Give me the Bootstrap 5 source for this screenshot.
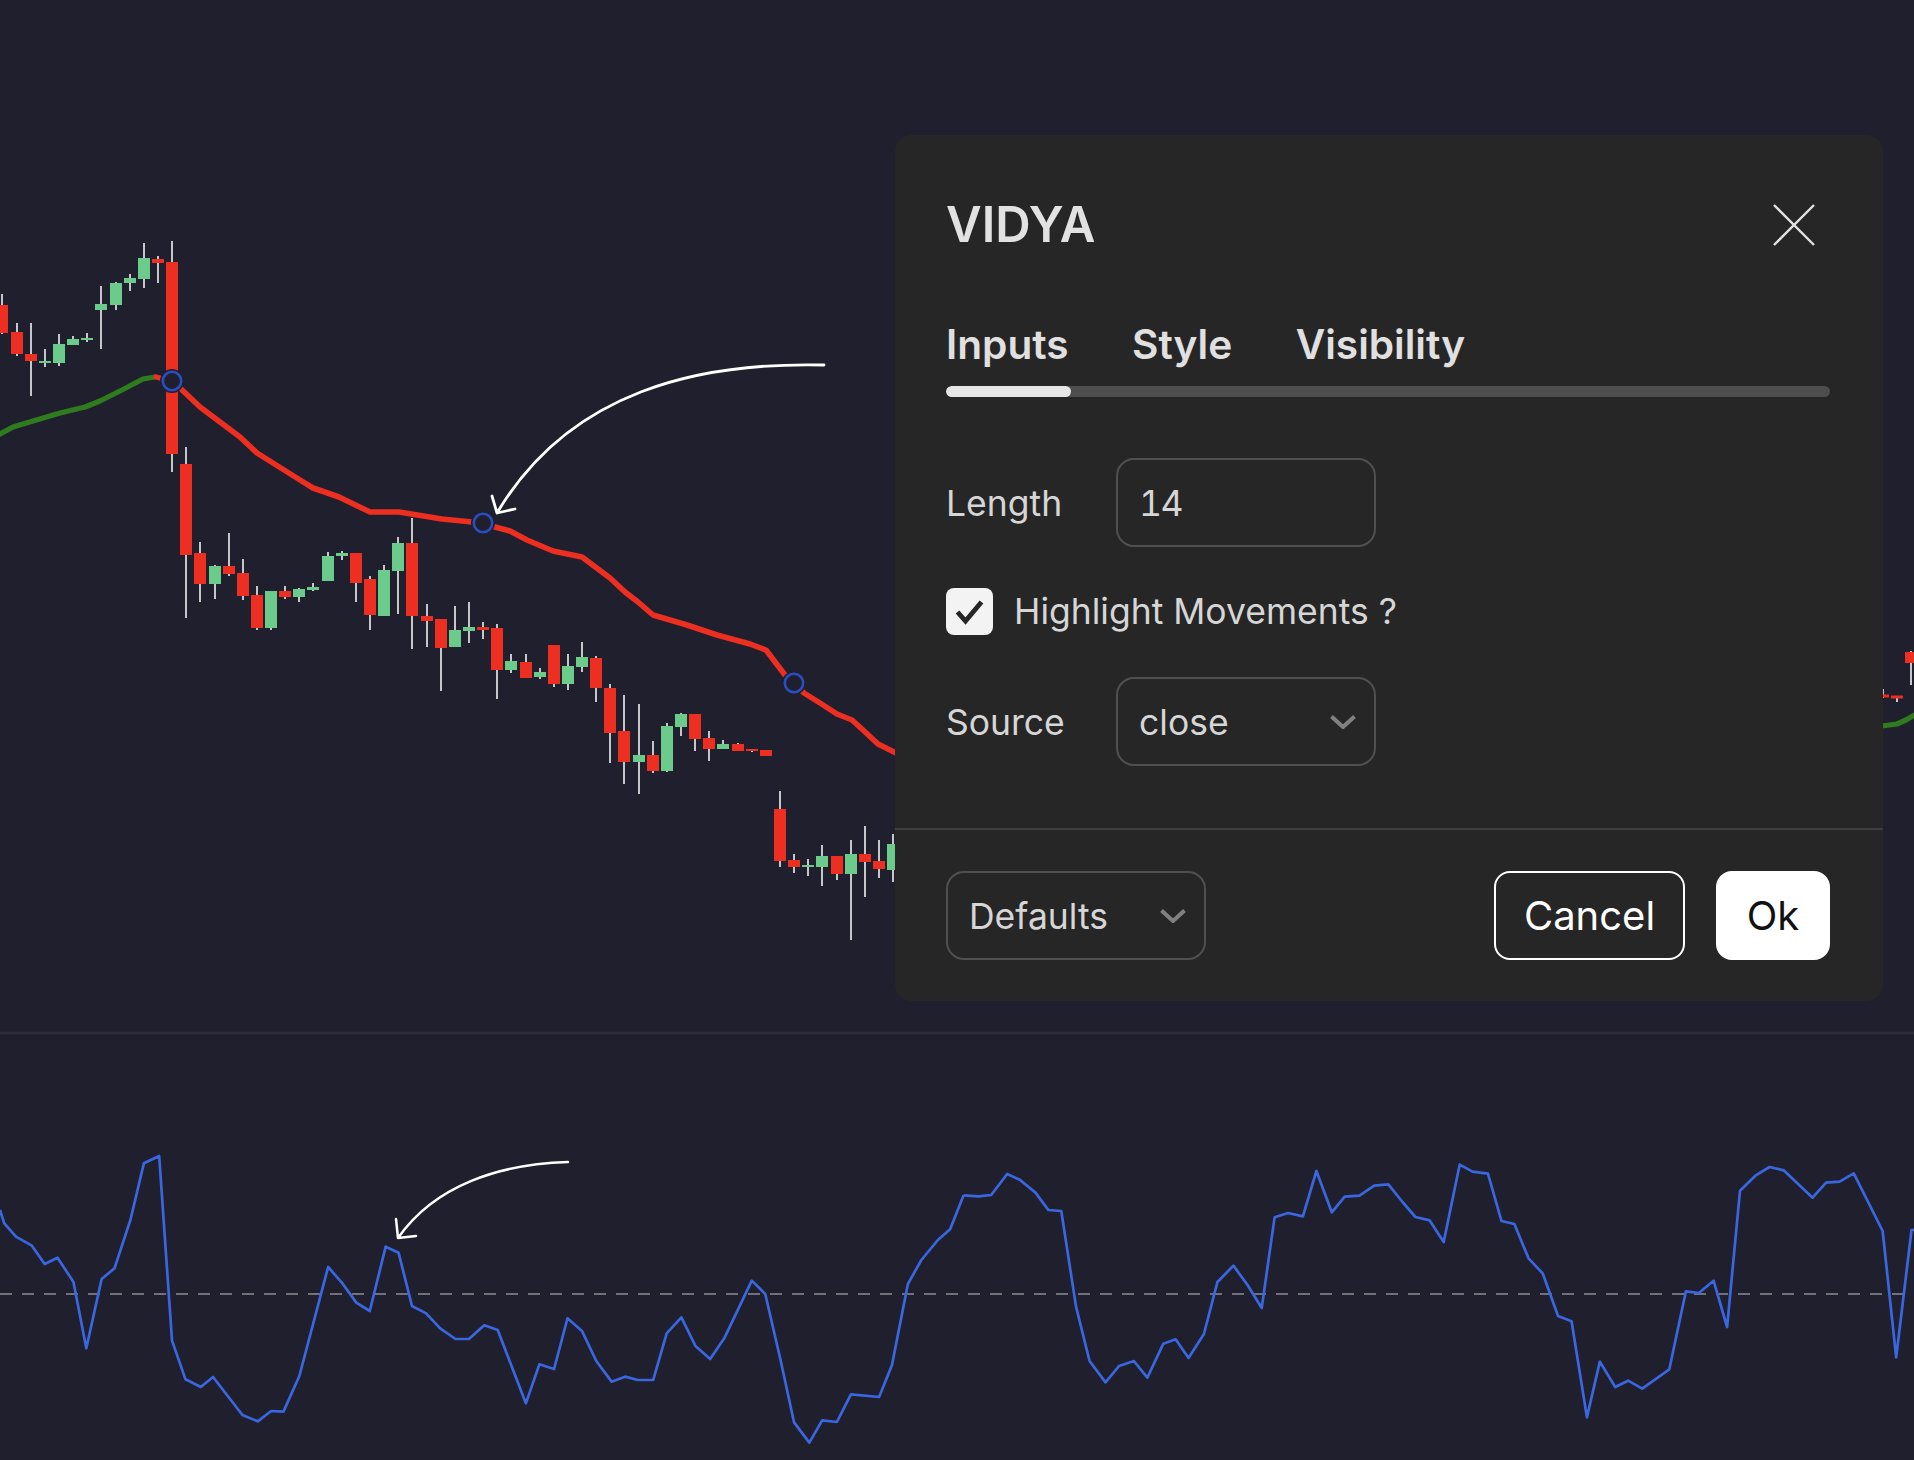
<!DOCTYPE html>
<html lang="en">
<head>
<meta charset="utf-8">
<title>VIDYA</title>
<link href="https://cdn.jsdelivr.net/npm/bootstrap@5.3.0/dist/css/bootstrap.min.css" rel="stylesheet">
<style>
html,body{margin:0;background:#1f1f2d;font-family:Inter,"Liberation Sans",sans-serif}
.chart-stage{position:relative;width:1914px;height:1460px;overflow:hidden;background:#1f1f2d}
.chart-svg{display:block}
.vidya-dialog{position:absolute;left:895px;top:135px;width:988px;height:866px;background:#262626;border:0;border-radius:16px;color:#d6d6d6}
.vidya-body{padding:61px 53px 0 51px}
.vidya-title{font-size:49px;line-height:58px;font-weight:600;color:#e2e2e2;margin:0}
.vidya-close{width:42px;height:42px;padding:0;border:0;background:none;line-height:0;margin-right:15px}
.vidya-tabs{margin-top:67px;gap:63.5px}
.vidya-tab{padding:0;font-size:40.6px;line-height:48px;font-weight:600;color:#e0e0e0;background:none;border:0}
.vidya-track{margin-top:17px;height:11px;border-radius:6px;background:#4d4d4d}
.vidya-fill{width:125px;background:#e6e6e6;border-radius:6px}
.vidya-row{margin-top:42px}
.vidya-row-first{margin-top:61px}
.vidya-row-check{margin-top:41px}
.vidya-label{width:170px;margin:0;padding-top:2px;font-size:35.5px;line-height:44px;color:#d6d6d6;flex:none}
.vidya-field,.vidya-field:focus{width:260px;height:89px;padding:2px 21px 0;font-size:35.5px;line-height:44px;color:#d6d6d6;background-color:#262626;border:2px solid #505050;border-radius:18px;box-shadow:none}
input.vidya-field{font-feature-settings:"tnum";letter-spacing:-1.5px}
select.vidya-field{background-image:url("data:image/svg+xml,%3Csvg xmlns='http://www.w3.org/2000/svg' viewBox='0 0 26 14'%3E%3Cpath d='M1.5 1.5 13 12 24.5 1.5' fill='none' stroke='%23808080' stroke-width='4'/%3E%3C/svg%3E");background-size:26px 14px;background-position:right 18px center;background-repeat:no-repeat;padding-right:50px}
.vidya-check,.vidya-check:checked{width:47px;height:47px;margin:0;flex:none;border:0;border-radius:8px;background-color:#f3f3f3;background-size:47px 47px;box-shadow:none;background-image:url("data:image/svg+xml,%3Csvg xmlns='http://www.w3.org/2000/svg' viewBox='0 0 47 47'%3E%3Cpath d='M11.5 24l8 9L35.5 14' fill='none' stroke='%23262626' stroke-width='4.8'/%3E%3C/svg%3E")}
.vidya-check-label{margin:0 0 0 21px;font-size:35.5px;line-height:44px;color:#d6d6d6}
.vidya-foot{margin-top:62px;padding:41px 53px 0 51px;border-top:2px solid #3f3f3f;background:none;border-radius:0}
.vidya-btn,.vidya-btn:hover{height:89px;padding:1px 0 0;font-size:40px;line-height:48px;font-weight:400;border-radius:16px;border:2px solid #fff}
.vidya-cancel,.vidya-cancel:hover{width:191px;background:#262626;color:#fff;margin-right:31px}
.vidya-ok,.vidya-ok:hover{width:114px;background:#fff;color:#111}
</style>
</head>
<body>
<main class="chart-stage">
<svg class="chart-svg" width="1914" height="1460" viewBox="0 0 1914 1460" fill="none" xmlns="http://www.w3.org/2000/svg">
  <path stroke="#2d2e3c" stroke-width="2.5" d="M0 1033H1914"/>
  <path stroke="#c6c6cb" stroke-width="2" d="M2 294V334M17 323V356M31 323V396M45 349V367M59 334V366M73 336V345M87 333V342M101 286V349M116 282V310M130 274V291M144 243V288M158 256V283M172 241V472M186 447V618M200 542V602M215 565V599M229 533V576M243 559V600M257 586V630M271 591V630M285 586V599M299 588V602M313 583V591M328 552V581M342 551V560M356 553V602M370 576V630M384 565V616M398 537V614M412 518V649M427 604V647M441 619V691M455 606V647M469 602V643M483 622V639M497 624V699M511 654V673M526 654V678M540 668V679M554 645V687M568 654V690M582 642V672M596 656V702M610 684V763M624 695V784M639 704V794M653 741V773M667 723V772M681 713V736M695 714V751M709 731V761M723 740V749M738 743V751M752 749V752M780 791V867M794 854V873M808 859V876M822 845V886M837 856V880M851 840V940M865 826V897M879 840V878M893 834V882M1883 689V698M1897 698V702M1911 651V685"/>
  <path stroke="#6acb8a" stroke-width="12" d="M45 361V363M59 344V363M73 339V345M87 338V340M101 304V310M116 283V305M130 278V283M144 258V279M215 566V584M271 591V628M299 589V597M313 587V590M328 556V581M342 553V556M384 570V616M398 543V571M455 630V647M469 627V631M511 661V670M540 672V677M568 666V684M582 657V667M639 755V762M667 726V771M681 714V727M723 744V749M808 865V867M822 856V867M851 854V874M893 844V870"/>
  <path stroke="#ec2f21" stroke-width="12" d="M2 305V333M17 332V354M31 354V361M158 259V263M172 262V454M186 464V555M200 553V584M229 566V574M243 573V596M257 595V628M285 591V597M356 553V583M370 579V615M412 543V616M427 616V621M441 619V648M483 627V630M497 628V670M526 662V678M554 645V684M596 658V688M610 688V733M624 731V762M653 755V771M695 714V739M709 738V749M738 744V751M752 749V751M766 750V756M780 809V861M794 860V867M837 856V874M865 854V862M879 861V869M1911 652V663"/>
  <path stroke="#ec2f21" stroke-width="3" d="M1882 696H1889M1891 697H1903"/>
  <polyline stroke="#2f7c1f" stroke-width="5.2" stroke-linejoin="round" stroke-linecap="round" points="-2,435 13,427 33,421 60,413 85,407 100,401 120,391 143,379 155,377"/>
  <polyline stroke="#2f7c1f" stroke-width="5.2" stroke-linejoin="round" points="1882,726 1897,724 1906,720 1916,714"/>
  <polyline stroke="#ec2f21" stroke-width="5.2" stroke-linejoin="round" stroke-linecap="round" points="156,377 160,378"/>
  <polyline stroke="#ec2f21" stroke-width="5.6" stroke-linejoin="round" points="172,381 180,388 200,407 240,437 257,453 300,480 313,488 339,497 370,512 399,512 442,519 472,522 495,527 510,531 527,540 553,551 582,557 610,578 625,592 638,602 653,615 687,625 717,635 750,644 766,650 785,675 804,693 820,703 837,714 852,720 863,730 878,744 896,753"/>
  <g fill="#1f1f2d">
    <circle cx="172" cy="381" r="12"/><circle cx="483" cy="523" r="12"/><circle cx="794" cy="683" r="12"/>
  </g>
  <g stroke="#2a4dc2" stroke-width="2.6">
    <circle cx="172" cy="381" r="9.2"/><circle cx="483" cy="523" r="9.2"/><circle cx="794" cy="683" r="9.2"/>
  </g>
  <path stroke="#fff" stroke-width="2.8" stroke-linecap="round" stroke-linejoin="round" d="M824 365C700 362 570 390 497 513M492 496L497 513L515 509"/>
  <path stroke="#fff" stroke-width="2.5" stroke-linecap="round" stroke-linejoin="round" d="M568 1162C500 1164 435 1185 398 1238M396 1219L398 1238L416 1236"/>
  <path stroke="#8d8d93" stroke-width="1.5" stroke-dasharray="12 10" d="M0 1294H1914"/>
  <polyline stroke="#3a66e0" stroke-width="2.7" stroke-linejoin="round" vector-effect="non-scaling-stroke" transform="translate(0 1130) scale(.6122 .33333)" points="0,240 7,280 26,320 52,347 73,402 94,383 120,456 141,655 166,447 187,415 213,270 235,100 260,78 281,632 303,748 328,771 348,741 396,855 421,874 443,843 463,845 489,738 536,411 558,457 582,518 604,543 630,350 651,368 673,528 696,550 719,595 744,627 766,627 791,586 813,600 859,820 881,703 905,717 927,565 951,604 974,693 999,755 1021,740 1042,750 1067,750 1089,610 1113,562 1136,648 1160,687 1183,625 1228,452 1250,492 1275,690 1297,877 1322,938 1343,871 1367,876 1390,793 1436,801 1457,705 1483,462 1505,390 1532,330 1552,298 1574,196"/>
  <polyline stroke="#3a66e0" stroke-width="2.7" stroke-linejoin="round" vector-effect="non-scaling-stroke" transform="translate(950 1130) scale(.6148 .33333)" points="22,196 46,199 67,195 93,132 114,150 139,188 160,240 181,243 205,530 227,693 253,757 275,708 299,693 321,743 347,641 367,628 388,684 413,612 435,456 461,407 484,465 507,534 528,262 550,249 574,259 596,123 621,247 642,200 666,197 690,167 713,163 736,216 757,261 780,271 803,336 829,104 850,125 875,131 897,273 918,282 941,385 964,430 989,558 1011,574 1036,862 1057,695 1082,771 1103,752 1126,776 1170,718 1197,484 1218,489 1242,452 1264,591 1285,182 1310,137 1333,111 1356,121 1403,203 1425,158 1447,155 1470,130 1517,303 1539,682 1564,300 1575,298"/>
</svg>

<section class="card vidya-dialog">
  <div class="vidya-body">
    <div class="d-flex justify-content-between align-items-center">
      <h2 class="vidya-title">VIDYA</h2>
      <button type="button" class="vidya-close" aria-label="Close">
        <svg width="42" height="42" viewBox="0 0 42 42" fill="none"><path d="M1 1L41 41M41 1L1 41" stroke="#e2e2e2" stroke-width="2.4"/></svg>
      </button>
    </div>
    <nav class="nav vidya-tabs">
      <a class="nav-link vidya-tab" href="#">Inputs</a>
      <a class="nav-link vidya-tab" href="#">Style</a>
      <a class="nav-link vidya-tab" href="#">Visibility</a>
    </nav>
    <div class="progress vidya-track"><div class="progress-bar vidya-fill"></div></div>
    <div class="d-flex align-items-center vidya-row vidya-row-first">
      <label class="vidya-label" for="len">Length</label>
      <input id="len" class="form-control vidya-field" value="14">
    </div>
    <div class="d-flex align-items-center vidya-row vidya-row-check">
      <input id="hl" class="form-check-input vidya-check" type="checkbox" checked>
      <label class="vidya-check-label" for="hl">Highlight Movements ?</label>
    </div>
    <div class="d-flex align-items-center vidya-row">
      <label class="vidya-label" for="src">Source</label>
      <select id="src" class="form-select vidya-field"><option>close</option></select>
    </div>
  </div>
  <div class="d-flex justify-content-between vidya-foot">
    <select class="form-select vidya-field" aria-label="Defaults"><option>Defaults</option></select>
    <div class="d-flex">
      <button type="button" class="btn vidya-btn vidya-cancel">Cancel</button>
      <button type="button" class="btn vidya-btn vidya-ok">Ok</button>
    </div>
  </div>
</section>
</main>
<script src="https://cdn.jsdelivr.net/npm/bootstrap@5.3.0/dist/js/bootstrap.bundle.min.js"></script>
</body>
</html>
